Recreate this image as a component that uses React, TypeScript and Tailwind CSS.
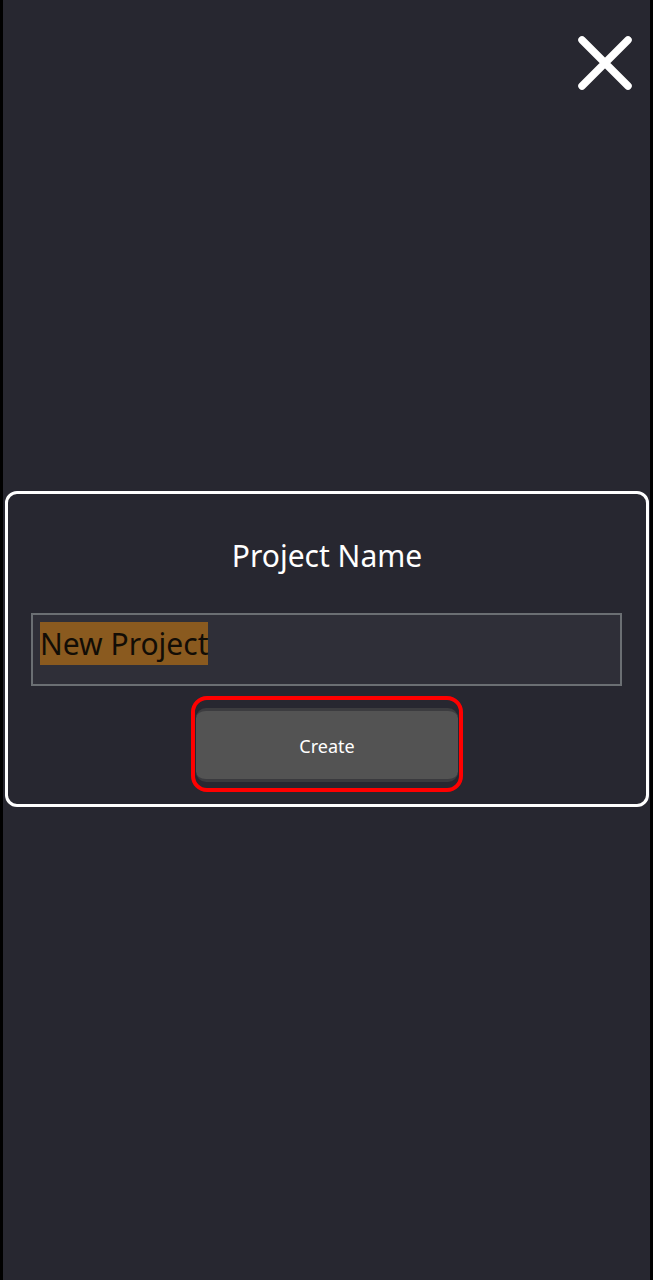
import { useState } from "react";

export default function App() {
  const [name, setName] = useState("New Project");

  return (
    <div className="w-full h-[1280px] bg-black flex px-[3px] font-['Noto_Sans',sans-serif]">
      <div className="flex-1 bg-[#272730] flex flex-col">
        {/* close */}
        <div className="flex justify-end pt-[36px] pr-[18px]">
          <button className="w-[54px] h-[54px]">
            <svg viewBox="0 0 54 54" className="w-[54px] h-[54px]">
              <path
                d="M4 4 L50 50 M50 4 L4 50"
                stroke="#ffffff"
                strokeWidth="7.5"
                strokeLinecap="round"
              />
            </svg>
          </button>
        </div>

        {/* dialog */}
        <div className="mt-[401px] ml-[2px] mr-[1px] border-[3px] border-white rounded-[12px] flex flex-col items-center pt-[43px] pb-[12px]">
          <h2 className="text-[30px] leading-[38px] text-white">Project Name</h2>

          <div className="self-stretch ml-[23px] mr-[24px] mt-[38px] h-[73px] border-2 border-[#6b6f73] bg-[#2f2f38] flex items-start pt-[7px] pl-[7px]">
            <span className="bg-[#8a5a1f] text-[#120d06] text-[30px] leading-[43px]">
              {name}
            </span>
          </div>

          <div className="mt-[10px] w-[272px] border-4 border-[#ff0000] rounded-[16px] pt-[8px] pb-[6px] px-[1px]">
            <button
              onClick={() => setName(name)}
              className="w-full h-[74px] rounded-[10px] bg-[#535353] border-t-[3px] border-b-[3px] border-t-[#3c3c3f] border-b-[#3a3a3e] pt-[3px] text-white text-[18px]"
            >
              Create
            </button>
          </div>
        </div>
      </div>
    </div>
  );
}
